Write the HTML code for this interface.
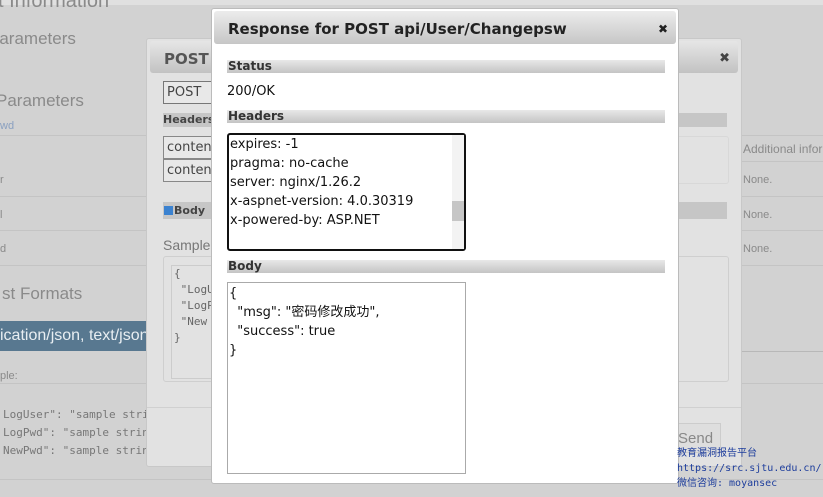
<!DOCTYPE html>
<html><head><style>
body{margin:0;width:823px;height:497px;overflow:hidden;background:#d2d2d2;font-family:"Liberation Sans","Noto Sans CJK SC",sans-serif;position:relative}
.a{position:absolute;white-space:nowrap}
.t{color:#8a8a8a}
.bar{position:absolute;left:15px;width:438px;height:13px;background:linear-gradient(#e8e8e8,#c4c4c4);font:bold 12px "DejaVu Sans",sans-serif;color:#333;line-height:13px;padding-left:1px;box-sizing:border-box}
.ta{position:absolute;left:15px;width:239px;background:#fff;font:13px "DejaVu Sans",sans-serif;color:#111;line-height:19px;box-sizing:border-box;padding:3px 1px;white-space:pre}
</style></head><body>
<div class="a" style="left:0;top:0;width:823px;height:5px;background:#e0e0e0"></div>
<div class="a t" style="left:-12px;top:-10px;font-size:20px">st Information</div>
<div class="a t" style="left:-12px;top:29px;font-size:17px">Parameters</div>
<div class="a t" style="left:-4px;top:91px;font-size:17px">Parameters</div>
<div class="a" style="left:0px;top:120px;font-size:11px;color:#8aa0c0">wd</div>
<div class="a" style="left:0;top:135px;width:148px;border-top:1px solid #c4c4c4"></div>
<div class="a t" style="left:0px;top:174px;font-size:11px">r</div>
<div class="a" style="left:0;top:196px;width:148px;border-top:1px solid #c4c4c4"></div>
<div class="a t" style="left:0px;top:209px;font-size:11px">l</div>
<div class="a" style="left:0;top:230px;width:148px;border-top:1px solid #c4c4c4"></div>
<div class="a t" style="left:0px;top:243px;font-size:11px">d</div>
<div class="a" style="left:0;top:265px;width:148px;border-top:1px solid #c4c4c4"></div>
<div class="a t" style="left:2px;top:284px;font-size:17px">st Formats</div>
<div class="a" style="left:0;top:321px;width:146px;height:30px;background:#587890;color:#e8eef2;font-size:16px;line-height:30px;overflow:hidden">ication/json, text/json</div>
<div class="a t" style="left:0px;top:370px;font-size:11px">ple:</div>
<div class="a" style="left:0;top:383px;width:148px;border-top:1px solid #c4c4c4"></div>
<div class="a" style="left:3px;top:406px;width:143px;overflow:hidden;font:11px/18px 'DejaVu Sans Mono',monospace;color:#777;white-space:pre">LogUser": "sample string
LogPwd": "sample string
NewPwd": "sample string</div>
<div class="a" style="left:0;top:479px;width:823px;border-top:1px solid #c4c4c4"></div>
<div class="a" style="left:740px;top:135px;width:83px;border-top:1px solid #c4c4c4"></div>
<div class="a t" style="left:743px;top:142px;font-size:12px">Additional infor</div>
<div class="a" style="left:740px;top:161px;width:83px;border-top:1px solid #c4c4c4"></div>
<div class="a t" style="left:743px;top:174px;font-size:11px">None.</div>
<div class="a" style="left:740px;top:196px;width:83px;border-top:1px solid #c4c4c4"></div>
<div class="a t" style="left:743px;top:209px;font-size:11px">None.</div>
<div class="a" style="left:740px;top:230px;width:83px;border-top:1px solid #c4c4c4"></div>
<div class="a t" style="left:743px;top:243px;font-size:11px">None.</div>
<div class="a" style="left:740px;top:265px;width:83px;border-top:1px solid #c4c4c4"></div>
<div class="a" style="left:740px;top:351px;width:83px;border-top:1px solid #b8b8b8"></div>
<div class="a" style="left:740px;top:383px;width:83px;border-top:1px solid #c4c4c4"></div>

<div class="a" style="left:146px;top:38px;width:594px;height:427px;background:#e2e2e2;border:1px solid #c8c8c8;border-radius:3px">
 <div class="a" style="left:3px;top:2px;width:588px;height:32px;background:linear-gradient(#e6e6e6,#c2c2c2);border-radius:3px;font:bold 15px/36px 'DejaVu Sans',sans-serif;color:#555;padding-left:14px;box-sizing:border-box">POST a<span style="position:absolute;right:8px;font-size:13px;color:#444">✖</span></div>
 <div class="a" style="left:16px;top:42px;width:60px;height:21px;border:1px solid #777;background:#e8e8e8;font:13px/21px 'DejaVu Sans',sans-serif;color:#444;padding-left:3px">POST</div>
 <div class="a" style="left:16px;top:74px;width:564px;height:14px;background:#c6c6c6;font:bold 11px/14px 'DejaVu Sans',sans-serif;color:#444">Headers</div>
 <div class="a" style="left:16px;top:97px;width:60px;height:21px;border:1px solid #888;background:#e8e8e8;font:13px/21px 'DejaVu Sans',sans-serif;color:#444;padding-left:3px">conten</div>
 <div class="a" style="left:16px;top:120px;width:60px;height:21px;border:1px solid #888;background:#e8e8e8;font:13px/21px 'DejaVu Sans',sans-serif;color:#444;padding-left:3px">conten</div>
 <div class="a" style="left:410px;top:97px;width:170px;height:46px;border:1px solid #d8d8d8;border-radius:3px"></div>
 <div class="a" style="left:16px;top:163px;width:564px;height:17px;background:#c6c6c6;font:bold 11px/17px 'DejaVu Sans',sans-serif;color:#444"><span style="display:inline-block;width:9px;height:9px;background:#3b82d0;margin:0 1px 0 1px;vertical-align:-1px"></span>Body</div>
 <div class="a" style="left:16px;top:198px;font-size:14px;color:#777">Sample</div>
 <div class="a" style="left:16px;top:217px;width:564px;height:124px;border:1px solid #cfcfcf;border-radius:3px"></div>
 <div class="a" style="left:24px;top:226px;width:70px;height:112px;border:1px solid #ccc;font:11px/16px 'DejaVu Sans Mono',monospace;color:#666;white-space:pre;padding-left:2px;overflow:hidden">{
 "LogU
 "LogP
 "New
}</div>
 <div class="a" style="left:0;top:368px;width:594px;border-top:1px solid #d0d0d0"></div>
 <div class="a" style="left:510px;top:384px;width:64px;height:30px;border:1px solid #ccc;background:#dedede;font-size:15px;color:#888;line-height:30px;padding-left:20px;box-sizing:border-box">Send</div>
</div>

<div class="a" style="left:211px;top:8px;width:468px;height:476px;background:#fff;border:1px solid #bbb;border-radius:3px;box-sizing:border-box">
 <div class="a" style="left:2px;top:2px;width:462px;height:33px;background:linear-gradient(#ececec,#c6c6c6);border-radius:3px;font:bold 15px/36px 'DejaVu Sans',sans-serif;color:#222;padding-left:14px;box-sizing:border-box">Response for POST api/User/Changepsw<span style="position:absolute;right:8px;font-size:12px;color:#222">✖</span></div>
 <div class="bar" style="top:51px">Status</div>
 <div class="a" style="left:15px;top:75px;font:13px 'DejaVu Sans',sans-serif;color:#111">200/OK</div>
 <div class="bar" style="top:101px">Headers</div>
 <div class="ta" style="top:124px;height:118px;border:2px solid #111;border-radius:3px;line-height:19px;padding-top:0px">expires: -1
pragma: no-cache
server: nginx/1.26.2
x-aspnet-version: 4.0.30319
x-powered-by: ASP.NET</div>
 <div class="a" style="left:240px;top:126px;width:12px;height:114px;background:#f3f3f3"></div>
 <div class="a" style="left:240px;top:192px;width:12px;height:20px;background:#c6c6c6"></div>
 <div class="bar" style="top:251px">Body</div>
 <div class="ta" style="top:273px;height:192px;border:1px solid #aaa;padding-top:1px">{
  "msg": "密码修改成功",
  "success": true
}</div>
</div>

<div class="a" style="left:677px;top:446px;font:10px/15px 'WenQuanYi Zen Hei','DejaVu Sans Mono',monospace;color:#1d3d9c;white-space:pre">教育漏洞报告平台
https://src.sjtu.edu.cn/
微信咨询: moyansec</div>
</body></html>
